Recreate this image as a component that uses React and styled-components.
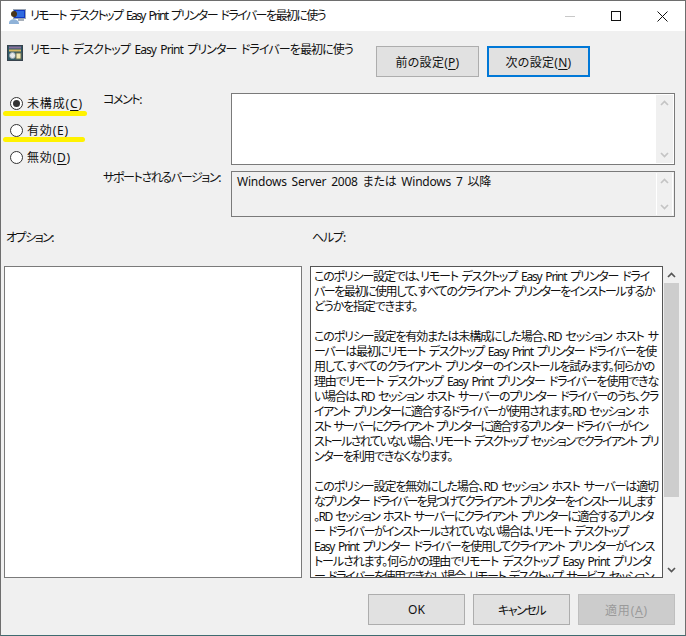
import React, { useLayoutEffect, useRef } from "react";
import styled, { createGlobalStyle } from "styled-components";

const Global = createGlobalStyle`
  html, body { margin: 0; padding: 0; background: #fff; }
  * { box-sizing: border-box; }
`;

const FONT = `"Noto Sans", "Noto Sans CJK JP", sans-serif`;

const Win = styled.div`
  width: 686px; height: 636px; display: flex; flex-direction: column;
  border: 1px solid #6e6e6e; border-bottom-color: #3f6b70;
  font-family: ${FONT}; font-size: 12px; color: #111; background: #f0f0f0; overflow: hidden;
  font-feature-settings: "palt";
  u { text-underline-offset: 2px; }
`;
const TitleBar = styled.div`
  height: 30px; flex: none; background: #fff; display: flex; align-items: center; padding-left: 8px;
`;
const TitleText = styled.div`
  flex: 1; padding-left: 4px; line-height: 18px;
`;
const WinBtns = styled.div` display: flex; flex: none; `;
const WinBtn = styled.div`
  width: 46px; height: 30px; display: flex; align-items: center; justify-content: center;
`;
const Body = styled.div`
  flex: 1; display: flex; flex-direction: column; padding: 15px 0 0 3px;
`;
const Head = styled.div`
  display: flex; align-items: flex-start; height: 47px; padding-left: 3px;
`;
const HeadIcon = styled.div` flex: none; margin-top: -1px; height: 17px; `;
const HeadTitle = styled.div`
  width: 346px; margin-left: 7px; margin-top: -5px; line-height: 18px; flex: none;
`;
const Btn = styled.div`
  width: ${p => p.$w || 97}px; height: 31px; flex: none; display: flex; align-items: center; justify-content: center;
  background: ${p => p.$disabled ? "#cccccc" : "#e1e1e1"};
  border: ${p => p.$focus ? "2px solid #0078d7" : `1px solid ${p.$disabled ? "#bfbfbf" : "#adadad"}`};
  color: ${p => p.$disabled ? "#9a9a9a" : "#111"};
`;
const HeadBtns = styled.div` display: flex; gap: 8px; `;
const Mid = styled.div`
  display: grid; grid-template-columns: 99px 128px 444px; height: 124px;
`;
const Radios = styled.div`
  display: flex; flex-direction: column; padding: 1px 0 0 6px; gap: 9px;
`;
const RadioRow = styled.div`
  position: relative; height: 18px; display: flex; align-items: center; gap: 4px;
`;
const RadioText = styled.span` margin-top: -1px; `;
const Mark = styled.span`
  position: absolute; left: -7px; top: ${p => p.$top}px; height: 5px; width: ${p => p.$w}px; border-radius: 2.5px; background: #fff200;
`;
const Circle = styled.span`
  width: 13px; height: 13px; border-radius: 50%; border: 1px solid #333; background: #fff; display: flex; align-items: center; justify-content: center; flex: none;
  &::after { content: ""; width: 7px; height: 7px; border-radius: 50%; background: ${p => p.$on ? "#333" : "transparent"}; }
`;
const Labels = styled.div` display: flex; flex-direction: column; `;
const LabelTop = styled.div` height: 78px; margin-top: -2px; line-height: 18px; `;
const LabelBottom = styled.div` line-height: 18px; `;
const Boxes = styled.div` display: flex; flex-direction: column; gap: 6px; `;
const Box = styled.div`
  height: ${p => p.$h}px; border: 1px solid #7a7a7a; background: ${p => p.$gray ? "#f0f0f0" : "#fff"}; display: flex;
`;
const BoxText = styled.div`
  flex: 1; padding: 1px 0 0 5px; line-height: 18px;
`;
const MiniScroll = styled.div`
  width: 17px; margin: 1px 1px 1px 0; background: #f0f0f0; display: flex; flex-direction: column; justify-content: space-between; align-items: center; padding: 5px 0;
  border-left: 1px solid ${p => p.$gray ? "#fff" : "#f0f0f0"};
  border-right: 1px solid ${p => p.$gray ? "#fff" : "#f0f0f0"};
`;
const Section = styled.div`
  display: grid; grid-template-columns: 306px 370px; height: 49px;
`;
const SecLabel = styled.div` padding: 12px 0 0 2px; line-height: 18px; `;
const Panels = styled.div` display: flex; height: 312px; `;
const OptionBox = styled.div`
  width: 298px; flex: none; border: 1px solid #7a7a7a; background: #fff;
`;
const HelpBox = styled.div`
  width: 353px; margin-left: 8px; flex: none; border: 1px solid #555; background: #fff; overflow: hidden; padding: 2px 0 0 3px;
`;
const HelpLine = styled.div` height: 15px; line-height: 15px; white-space: pre; `;
const Scroll = styled.div`
  width: 17px; flex: none; background: #f0f0f0; display: flex; flex-direction: column; align-items: center;
`;
const ScrollArrow = styled.div`
  height: 17px; flex: none; display: flex; align-items: center; justify-content: center;
`;
const Thumb = styled.div` width: 15px; height: 214px; flex: none; background: #cdcdcd; `;
const Track = styled.div` flex: 1; `;
const Foot = styled.div`
  display: flex; justify-content: flex-end; gap: 8px; padding: 16px 10px 0 0;
`;
const FitSpan = styled.span`
  display: inline-block; white-space: pre; word-spacing: 2px; line-height: inherit;
`;

// Squeezes a run of text to the width it has in the picture.
const Fit = ({ w, children }) => {
  const ref = useRef(null);
  useLayoutEffect(() => {
    const el = ref.current;
    const n = el.textContent.length;
    el.style.letterSpacing = "0px";
    const natural = el.getBoundingClientRect().width;
    el.style.letterSpacing = `${(w - natural) / n}px`;
  }, [w]);
  return <FitSpan ref={ref}>{children}</FitSpan>;
};

const Chev = ({ up, color = "#c4c4c4" }) => (
  <svg width="9" height="6" viewBox="0 0 9 6">
    <path d={up ? "M1 5 L4.5 1.5 L8 5" : "M1 1 L4.5 4.5 L8 1"} fill="none" stroke={color} strokeWidth="1.7" />
  </svg>
);

const TitleIcon = () => (
  <svg width="17" height="16" viewBox="0 0 17 16" style={{ flex: "none" }}>
    <rect x="4.5" y="1.5" width="12" height="9" fill="#1438c0" stroke="#9aa5b5" />
    <rect x="7" y="3" width="8" height="6" fill="#2f6be0" />
    <rect x="9" y="11" width="6" height="2" fill="#a8b0ba" />
    <circle cx="5" cy="6" r="3" fill="#4a3518" />
    <path d="M0 15 C0 10 9 10 10 15 L10 16 L0 16 Z" fill="#8fb2d8" />
  </svg>
);
const PolicyIcon = () => (
  <svg width="16" height="16" viewBox="0 0 16 16">
    <rect x="0.5" y="0.5" width="15" height="15" fill="#2f5a66" stroke="#37424c" />
    <rect x="2" y="1.5" width="12" height="2" fill="#8a6f9a" />
    <rect x="2" y="4.5" width="12" height="2" fill="#d8b860" />
    <circle cx="5.5" cy="10.5" r="3" fill="#e4e8ea" stroke="#9aa6ad" />
    <rect x="9" y="8" width="5" height="6" fill="#efe7b4" stroke="#6c6c50" />
  </svg>
);

// Each line of the help text with its width in the picture.
const help = [
  ["このポリシー設定では、リモート デスクトップ Easy Print プリンター ドライ", 335],
  ["バーを最初に使用して、すべてのクライアント プリンターをインストールするか", 340],
  ["どうかを指定できます。", 103],
  ["", 0],
  ["このポリシー設定を有効または未構成にした場合、RD セッション ホスト サ", 344],
  ["ーバーは最初にリモート デスクトップ Easy Print プリンター ドライバーを使", 342],
  ["用して、すべてのクライアント プリンターのインストールを試みます。何らかの", 340],
  ["理由でリモート デスクトップ Easy Print プリンター ドライバーを使用できな", 344],
  ["い場合は、RD セッション ホスト サーバーのプリンター ドライバーのうち、クラ", 344],
  ["イアント プリンターに適合するドライバーが使用されます。RD セッション ホ", 334],
  ["スト サーバーにクライアント プリンターに適合するプリンター ドライバーがイン", 333],
  ["ストールされていない場合、リモート デスクトップ セッションでクライアント プリ", 344],
  ["ンターを利用できなくなります。", 138],
  ["", 0],
  ["このポリシー設定を無効にした場合、RD セッション ホスト サーバーは適切", 344],
  ["なプリンター ドライバーを見つけてクライアント プリンターをインストールします", 340],
  ["。RD セッション ホスト サーバーにクライアント プリンターに適合するプリンタ", 339],
  ["ー ドライバーがインストールされていない場合は、リモート デスクトップ", 314],
  ["Easy Print プリンター ドライバーを使用してクライアント プリンターがインス", 340],
  ["トールされます。何らかの理由でリモート デスクトップ Easy Print プリンタ", 337],
  ["ー ドライバーを使用できない場合、リモート デスクトップ サービス セッション", 339],
];

export default function App() {
  return (
    <>
      <Global />
      <Win>
        <TitleBar>
          <TitleIcon />
          <TitleText><Fit w={295}>リモート デスクトップ Easy Print プリンター ドライバーを最初に使う</Fit></TitleText>
          <WinBtns>
            <WinBtn>
              <svg width="10" height="10" viewBox="0 0 10 10"><path d="M0 5.5H10" stroke="#c8c8c8" /></svg>
            </WinBtn>
            <WinBtn>
              <svg width="10" height="10" viewBox="0 0 10 10"><rect x=".5" y=".5" width="9" height="9" fill="none" stroke="#111" /></svg>
            </WinBtn>
            <WinBtn>
              <svg width="11" height="11" viewBox="0 0 11 11"><path d="M.5 .5L10.5 10.5M10.5 .5L.5 10.5" stroke="#111" /></svg>
            </WinBtn>
          </WinBtns>
        </TitleBar>
        <Body>
          <Head>
            <HeadIcon><PolicyIcon /></HeadIcon>
            <HeadTitle><Fit w={323}>リモート デスクトップ Easy Print プリンター ドライバーを最初に使う</Fit></HeadTitle>
            <HeadBtns>
              <Btn $w={103}><Fit w={64}>前の設定(<u>P</u>)</Fit></Btn>
              <Btn $w={103} $focus><Fit w={66}>次の設定(<u>N</u>)</Fit></Btn>
            </HeadBtns>
          </Head>
          <Mid>
            <Radios>
              <RadioRow><Circle $on /><RadioText><Fit w={56}>未構成(<u>C</u>)</Fit></RadioText><Mark $w={84} $top={17} /></RadioRow>
              <RadioRow><Circle /><RadioText><Fit w={42}>有効(<u>E</u>)</Fit></RadioText><Mark $w={82} $top={16} /></RadioRow>
              <RadioRow><Circle /><RadioText><Fit w={44}>無効(<u>D</u>)</Fit></RadioText></RadioRow>
            </Radios>
            <Labels>
              <LabelTop><Fit w={38}>コメント:</Fit></LabelTop>
              <LabelBottom><Fit w={117}>サポートされるバージョン:</Fit></LabelBottom>
            </Labels>
            <Boxes>
              <Box $h={72}>
                <BoxText />
                <MiniScroll><Chev up /><Chev /></MiniScroll>
              </Box>
              <Box $h={46} $gray>
                <BoxText><Fit w={254}>Windows Server 2008 または Windows 7 以降</Fit></BoxText>
                <MiniScroll $gray><Chev up /><Chev /></MiniScroll>
              </Box>
            </Boxes>
          </Mid>
          <Section>
            <SecLabel><Fit w={47}>オプション:</Fit></SecLabel>
            <SecLabel><Fit w={33}>ヘルプ:</Fit></SecLabel>
          </Section>
          <Panels>
            <OptionBox />
            <HelpBox>
              {help.map(([t, w], i) => <HelpLine key={i}>{t ? <Fit w={w}>{t}</Fit> : null}</HelpLine>)}
            </HelpBox>
            <Scroll>
              <ScrollArrow><Chev up color="#555" /></ScrollArrow>
              <Thumb />
              <Track />
              <ScrollArrow><Chev color="#555" /></ScrollArrow>
            </Scroll>
          </Panels>
          <Foot>
            <Btn><Fit w={17}>OK</Fit></Btn>
            <Btn><Fit w={47}>キャンセル</Fit></Btn>
            <Btn $disabled><Fit w={43}>適用(<u>A</u>)</Fit></Btn>
          </Foot>
        </Body>
      </Win>
    </>
  );
}
